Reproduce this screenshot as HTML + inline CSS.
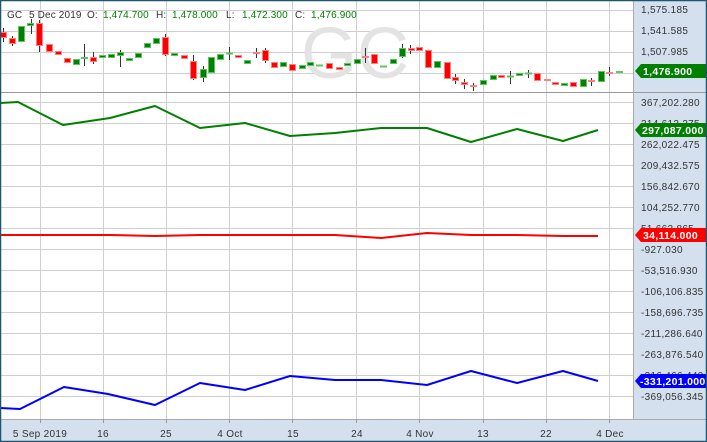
<!DOCTYPE html>
<html><head><style>
body{margin:0;background:#fff}
svg{display:block;font-family:"Liberation Sans","DejaVu Sans",sans-serif}
.ls{letter-spacing:0.3px}
.hs{letter-spacing:0.15px}
</style></head><body>
<svg width="707" height="442" viewBox="0 0 707 442" xmlns="http://www.w3.org/2000/svg">
<rect width="707" height="442" fill="#fff"/>
<rect x="633" y="0" width="74" height="442" fill="#d5e0ee"/>
<rect x="0" y="419" width="707" height="23" fill="#d5e0ee"/>
<g stroke="#cfcfcf" stroke-width="1">
<line x1="40.5" y1="0" x2="40.5" y2="419"/><line x1="103.5" y1="0" x2="103.5" y2="419"/><line x1="166.5" y1="0" x2="166.5" y2="419"/><line x1="229.5" y1="0" x2="229.5" y2="419"/><line x1="292.5" y1="0" x2="292.5" y2="419"/><line x1="356.5" y1="0" x2="356.5" y2="419"/><line x1="419.5" y1="0" x2="419.5" y2="419"/><line x1="483.5" y1="0" x2="483.5" y2="419"/><line x1="546.5" y1="0" x2="546.5" y2="419"/><line x1="609.5" y1="0" x2="609.5" y2="419"/>
<line x1="0" y1="10.5" x2="633" y2="10.5"/><line x1="0" y1="31.5" x2="633" y2="31.5"/><line x1="0" y1="52.5" x2="633" y2="52.5"/><line x1="0" y1="73.5" x2="633" y2="73.5"/>
<line x1="0" y1="102.5" x2="633" y2="102.5"/><line x1="0" y1="123.5" x2="633" y2="123.5"/><line x1="0" y1="144.5" x2="633" y2="144.5"/><line x1="0" y1="165.5" x2="633" y2="165.5"/><line x1="0" y1="186.5" x2="633" y2="186.5"/><line x1="0" y1="207.5" x2="633" y2="207.5"/><line x1="0" y1="228.5" x2="633" y2="228.5"/><line x1="0" y1="249.5" x2="633" y2="249.5"/><line x1="0" y1="270.5" x2="633" y2="270.5"/><line x1="0" y1="291.5" x2="633" y2="291.5"/><line x1="0" y1="312.5" x2="633" y2="312.5"/><line x1="0" y1="333.5" x2="633" y2="333.5"/><line x1="0" y1="354.5" x2="633" y2="354.5"/><line x1="0" y1="375.5" x2="633" y2="375.5"/><line x1="0" y1="396.5" x2="633" y2="396.5"/>
</g>
<line x1="0" y1="92.5" x2="707" y2="92.5" stroke="#999"/>
<line x1="633.5" y1="0" x2="633.5" y2="419" stroke="#aaa"/>
<line x1="0" y1="419.5" x2="707" y2="419.5" stroke="#aaa"/>
<text x="301" y="78" font-size="72" fill="#e3e3e3">GC</text>
<g font-size="10" fill="#333" class="hs">
<text x="7" y="18">GC</text><text x="29" y="18">5 Dec 2019</text><text x="87" y="18">O:</text><text x="156" y="18">H:</text><text x="226" y="18">L:</text><text x="295" y="18">C:</text>
<g fill="#008000"><text x="103" y="18">1,474.700</text><text x="172" y="18">1,478.000</text><text x="242" y="18">1,472.300</text><text x="311" y="18">1,476.900</text></g>
</g>
<g stroke="#333" stroke-width="1">
<line x1="3.5" y1="28" x2="3.5" y2="42"/><line x1="12.5" y1="36" x2="12.5" y2="46"/><line x1="39.5" y1="20" x2="39.5" y2="52"/><line x1="31.5" y1="19" x2="31.5" y2="34"/><line x1="84.5" y1="44" x2="84.5" y2="66"/><line x1="93.5" y1="52" x2="93.5" y2="64"/><line x1="120.5" y1="50" x2="120.5" y2="67"/><line x1="165.5" y1="34" x2="165.5" y2="56"/><line x1="193.5" y1="55" x2="193.5" y2="80"/><line x1="203.5" y1="66" x2="203.5" y2="82"/><line x1="229.5" y1="47" x2="229.5" y2="60"/><line x1="256.5" y1="48" x2="256.5" y2="58"/><line x1="265.5" y1="48" x2="265.5" y2="63"/><line x1="365.5" y1="48" x2="365.5" y2="63"/><line x1="402.5" y1="44" x2="402.5" y2="58"/><line x1="410.5" y1="45" x2="410.5" y2="54"/><line x1="455.5" y1="74" x2="455.5" y2="84"/><line x1="464.5" y1="79" x2="464.5" y2="89"/><line x1="473.5" y1="83" x2="473.5" y2="91"/><line x1="510.5" y1="71" x2="510.5" y2="84"/><line x1="528.5" y1="70" x2="528.5" y2="78"/><line x1="591.5" y1="78" x2="591.5" y2="86"/><line x1="609.5" y1="67" x2="609.5" y2="76"/>
</g>
<g fill="#ff0000" stroke="#ff8080" stroke-width="1">
<rect x="0.5" y="32.5" width="6" height="5"/><rect x="9.5" y="38.5" width="6" height="5"/><rect x="36.5" y="23.5" width="6" height="22"/><rect x="46.5" y="44.5" width="6" height="7"/><rect x="55.5" y="51.5" width="6" height="3"/><rect x="64.5" y="58.5" width="6" height="4"/><rect x="90.5" y="57.5" width="6" height="4"/><rect x="162.5" y="37.5" width="6" height="17"/><rect x="181.5" y="55.5" width="6" height="3"/><rect x="190.5" y="61.5" width="6" height="17"/><rect x="235.5" y="55.5" width="6" height="2"/><rect x="253.5" y="52.5" width="6" height="1"/><rect x="262.5" y="50.5" width="6" height="10"/><rect x="271.5" y="62.5" width="6" height="5"/><rect x="289.5" y="64.5" width="6" height="6"/><rect x="326.5" y="63.5" width="6" height="5"/><rect x="336.5" y="67.5" width="6" height="2"/><rect x="362.5" y="56.5" width="6" height="1"/><rect x="371.5" y="54.5" width="6" height="9"/><rect x="408.5" y="48.5" width="6" height="2"/><rect x="416.5" y="47.5" width="6" height="3"/><rect x="425.5" y="50.5" width="6" height="17"/><rect x="444.5" y="62.5" width="6" height="16"/><rect x="452.5" y="77.5" width="6" height="3"/><rect x="461.5" y="82.5" width="6" height="2"/><rect x="470.5" y="85.5" width="6" height="1"/><rect x="498.5" y="75.5" width="6" height="2"/><rect x="534.5" y="73.5" width="6" height="7"/><rect x="544.5" y="79.5" width="6" height="1"/><rect x="552.5" y="82.5" width="6" height="2"/><rect x="570.5" y="82.5" width="6" height="4"/><rect x="588.5" y="80.5" width="6" height="1"/><rect x="606.5" y="72.5" width="6" height="1"/>
</g>
<g fill="#008000" stroke="#5ec45e" stroke-width="1">
<rect x="18.5" y="26.5" width="6" height="15"/><rect x="27.5" y="23.5" width="6" height="2"/><rect x="73.5" y="59.5" width="6" height="5"/><rect x="81.5" y="57.5" width="6" height="1"/><rect x="99.5" y="55.5" width="6" height="2"/><rect x="108.5" y="54.5" width="6" height="3"/><rect x="117.5" y="52.5" width="6" height="3"/><rect x="126.5" y="58.5" width="6" height="2"/><rect x="135.5" y="53.5" width="6" height="4"/><rect x="144.5" y="43.5" width="6" height="4"/><rect x="153.5" y="38.5" width="6" height="5"/><rect x="171.5" y="53.5" width="6" height="2"/><rect x="200.5" y="69.5" width="6" height="8"/><rect x="208.5" y="57.5" width="6" height="15"/><rect x="217.5" y="54.5" width="6" height="5"/><rect x="226.5" y="53" width="6" height="1"/><rect x="244.5" y="60.5" width="6" height="3"/><rect x="280.5" y="62.5" width="6" height="4"/><rect x="299.5" y="65.5" width="6" height="3"/><rect x="307.5" y="62.5" width="6" height="3"/><rect x="316.5" y="65" width="6" height="1"/><rect x="344.5" y="63.5" width="6" height="2"/><rect x="354.5" y="59.5" width="6" height="4"/><rect x="380.5" y="66" width="6" height="1"/><rect x="390.5" y="59.5" width="6" height="4"/><rect x="399.5" y="48.5" width="6" height="8"/><rect x="434.5" y="61.5" width="6" height="6"/><rect x="480.5" y="80.5" width="6" height="4"/><rect x="490.5" y="75.5" width="6" height="4"/><rect x="507.5" y="76" width="6" height="1"/><rect x="516.5" y="73.5" width="6" height="2"/><rect x="525.5" y="73" width="6" height="1"/><rect x="561.5" y="83.5" width="6" height="2"/><rect x="580.5" y="79.5" width="6" height="7"/><rect x="598.5" y="71.5" width="6" height="10"/><rect x="616.5" y="71.5" width="6" height="1"/>
</g>
<g fill="none" stroke-width="2" stroke-linejoin="round">
<polyline stroke="#008000" points="0,103 18,102 63,125 110,118 155,106 200,128 245,123 290,136 335,133 381,128 427,128 471,142 517,129 563,141 598,130"/>
<polyline stroke="#ff0000" points="0,235 110,235 155,236 200,235 335,235 381,238 427,233 471,235 517,235 563,236 598,236"/>
<polyline stroke="#0000ff" points="0,408 20,409 64,387 108,394 155,405 200,383 245,390 290,376 335,380 381,380 427,385 471,371 517,383 563,371 598,381"/>
</g>
<g font-size="10" fill="#333" class="ls">
<text x="641" y="13">1,575.185</text><text x="641" y="34">1,541.585</text><text x="641" y="55">1,507.985</text>
<text x="641" y="106">367,202.280</text><text x="641" y="127">314,612.375</text><text x="641" y="148">262,022.475</text><text x="641" y="169">209,432.575</text><text x="641" y="190">156,842.670</text><text x="641" y="211">104,252.770</text><text x="641" y="232">51,662.865</text><text x="641" y="253">-927.030</text><text x="641" y="274">-53,516.930</text><text x="641" y="295">-106,106.835</text><text x="641" y="316">-158,696.735</text><text x="641" y="337">-211,286.640</text><text x="641" y="358">-263,876.540</text><text x="641" y="379">-316,466.440</text><text x="641" y="400">-369,056.345</text>
</g>
<g fill="#008000"><polygon points="635,71 641,64 706,64 706,78 641,78"/><polygon points="635,130 641,123 706,123 706,137 641,137"/></g>
<polygon fill="#ff0000" points="635,235 641,228 706,228 706,242 641,242"/>
<polygon fill="#0000ff" points="635,381 641,374 706,374 706,388 641,388"/>
<g font-size="10.5" fill="#fff" font-weight="bold" letter-spacing="0.3">
<text x="643" y="75">1,476.900</text><text x="642" y="134">297,087.000</text><text x="643" y="239">34,114.000</text><text x="640" y="385">-331,201.000</text>
</g>
<g stroke="#999"><line x1="40.5" y1="419" x2="40.5" y2="423"/><line x1="103.5" y1="419" x2="103.5" y2="423"/><line x1="166.5" y1="419" x2="166.5" y2="423"/><line x1="229.5" y1="419" x2="229.5" y2="423"/><line x1="292.5" y1="419" x2="292.5" y2="423"/><line x1="356.5" y1="419" x2="356.5" y2="423"/><line x1="419.5" y1="419" x2="419.5" y2="423"/><line x1="483.5" y1="419" x2="483.5" y2="423"/><line x1="546.5" y1="419" x2="546.5" y2="423"/><line x1="609.5" y1="419" x2="609.5" y2="423"/></g>
<g font-size="10" fill="#333" text-anchor="middle" class="ls">
<text x="40" y="437">5 Sep 2019</text><text x="103" y="437">16</text><text x="166" y="437">25</text><text x="230" y="437">4 Oct</text><text x="293" y="437">15</text><text x="357" y="437">24</text><text x="420" y="437">4 Nov</text><text x="483" y="437">13</text><text x="546" y="437">22</text><text x="610" y="437">4 Dec</text>
</g>
<rect x="0.5" y="0.5" width="706" height="441" fill="none" stroke="#1d5670" stroke-width="1.5"/>
</svg>
</body></html>
